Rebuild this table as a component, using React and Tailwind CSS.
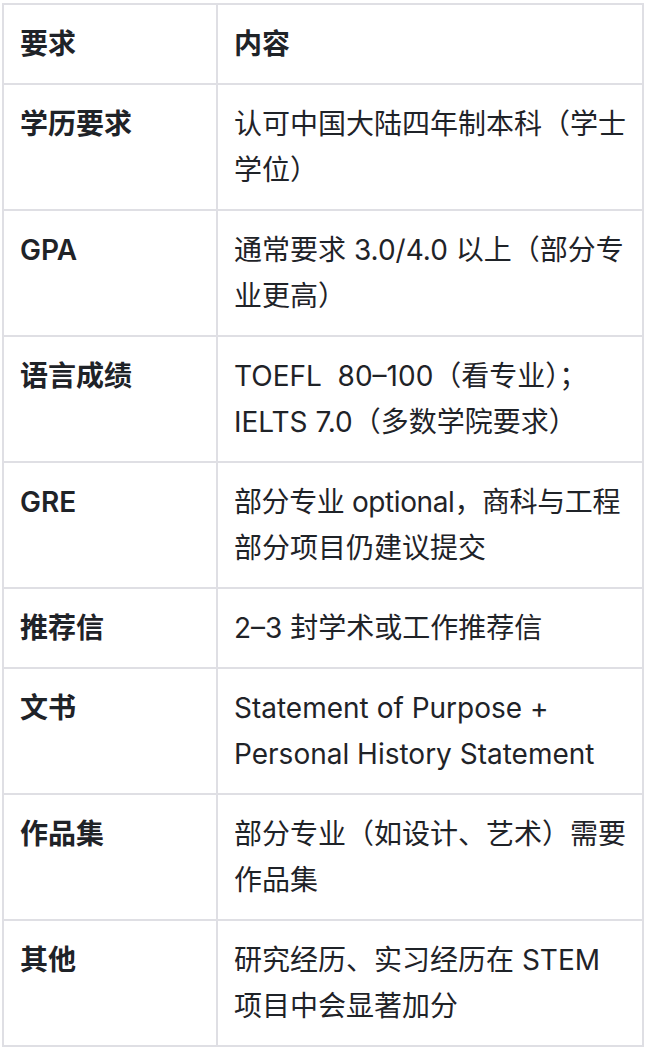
import React from "react";

const rows = [
  ["学历要求", ["认可中国大陆四年制本科（学士", "学位）"]],
  ["GPA", ["通常要求 3.0/4.0 以上（部分专", "业更高）"]],
  ["语言成绩", ["TOEFL\u00a0 80–100（看专业）；", "IELTS 7.0（多数学院要求）"]],
  ["GRE", ["部分专业 optional，商科与工程", "部分项目仍建议提交"], true],
  ["推荐信", ["2–3 封学术或工作推荐信"]],
  ["文书", ["Statement of Purpose +", "Personal History Statement"]],
  ["作品集", ["部分专业（如设计、艺术）需要", "作品集"]],
  ["其他", ["研究经历、实习经历在 STEM", "项目中会显著加分"]],
];

export default function App() {
  return (
    <div
      className="min-h-[1052px] w-[650px] bg-white pl-[2px] pt-[3px] text-[#1f2328]"
      style={{ fontFamily: 'Inter, "Noto Sans CJK SC", sans-serif' }}
    >
      <div className="grid w-[642px] grid-cols-[214px_426px] border-l-2 border-t-2 border-[#dfdfe4] text-[28px] leading-[46px]">
        <div className="border-b-2 border-r-2 border-[#dfdfe4] p-4 font-semibold">要求</div>
        <div className="border-b-2 border-r-2 border-[#dfdfe4] p-4 font-semibold">内容</div>
        {rows.map(([k, v, tight]) => (
          <React.Fragment key={k}>
            <div className="border-b-2 border-r-2 border-[#dfdfe4] p-4 font-semibold">{k}</div>
            <div className="overflow-hidden border-b-2 border-r-2 border-[#dfdfe4] p-4">
              {v.map((line, i) => (
                <div
                  key={i}
                  className={tight && i === 0 ? "whitespace-nowrap tracking-[-0.4px]" : "whitespace-nowrap"}
                >
                  {line}
                </div>
              ))}
            </div>
          </React.Fragment>
        ))}
      </div>
    </div>
  );
}
